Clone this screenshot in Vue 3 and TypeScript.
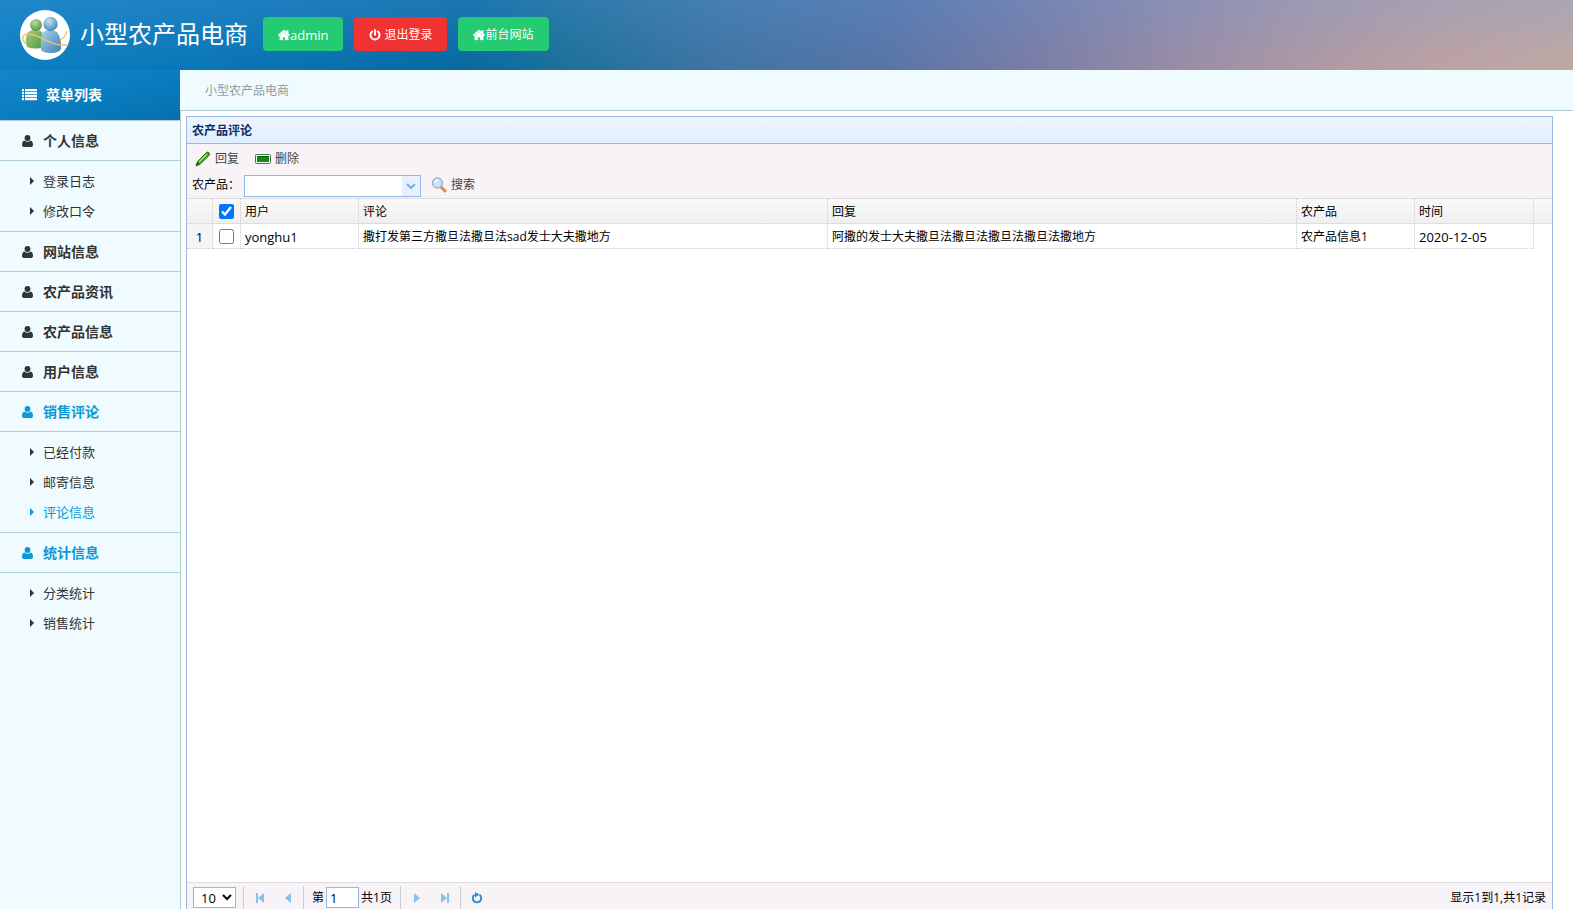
<script setup lang="ts">
import { ref } from 'vue'

interface MenuGroup {
  title: string
  active?: boolean
  items?: { label: string; active?: boolean }[]
}

const menu: MenuGroup[] = [
  { title: '个人信息', items: [{ label: '登录日志' }, { label: '修改口令' }] },
  { title: '网站信息' },
  { title: '农产品资讯' },
  { title: '农产品信息' },
  { title: '用户信息' },
  {
    title: '销售评论',
    active: true,
    items: [{ label: '已经付款' }, { label: '邮寄信息' }, { label: '评论信息', active: true }],
  },
  { title: '统计信息', active: true, items: [{ label: '分类统计' }, { label: '销售统计' }] },
]

const rows = [
  {
    user: 'yonghu1',
    comment: '撒打发第三方撒旦法撒旦法sad发士大夫撒地方',
    reply: '阿撒的发士大夫撒旦法撒旦法撒旦法撒旦法撒地方',
    product: '农产品信息1',
    date: '2020-12-05',
  },
]

const allChecked = ref(true)
const product = ref('')
const page = ref('1')
</script>

<template>
  <div class="app">
    <header class="top">
      <svg class="logo" viewBox="0 0 50 50" aria-hidden="true">
        <defs>
          <linearGradient id="g1" x1="0" y1="0" x2="1" y2="1">
            <stop offset="0" stop-color="#a9d08a" />
            <stop offset="1" stop-color="#4c9a35" />
          </linearGradient>
          <linearGradient id="b1" x1="0" y1="0" x2="1" y2="1">
            <stop offset="0" stop-color="#a8d4ee" />
            <stop offset="1" stop-color="#3a80b4" />
          </linearGradient>
          <radialGradient id="g2" cx=".4" cy=".3" r=".7">
            <stop offset="0" stop-color="#b9dca0" />
            <stop offset="1" stop-color="#549c40" />
          </radialGradient>
          <radialGradient id="b2" cx=".4" cy=".3" r=".7">
            <stop offset="0" stop-color="#c6e4f6" />
            <stop offset="1" stop-color="#4388bb" />
          </radialGradient>
        </defs>
        <circle cx="25" cy="25" r="25" fill="#fff" />
        <path d="M8 22q7-5 14 0l2 15q-8 3-17 0-3-8 1-15z" fill="url(#g1)" />
        <circle cx="16" cy="15" r="6" fill="url(#g2)" />
        <path d="M23 22q7-4 14 0 5 7 4 17-2 4-10 4t-10-3q-1-10 2-18z" fill="url(#b1)" />
        <circle cx="30.500" cy="14" r="7.200" fill="url(#b2)" />
        <path d="M6 34C0 28 3 23 10 24c12 2 20 11 31 11h6M40 30q6-3 7-9" fill="none" stroke="#efc06c" stroke-width="1.400" />
      </svg>
      <h1>小型农产品电商</h1>
      <nav class="actions">
        <a href="#" class="btn latin">
          <svg viewBox="0 0 12 12"><path d="M6 .8 0 6l.9 1L6 2.900 11.100 7l.9-1-1.700-1.500V1.500H8.500V3zM6 3.600 1.700 7.100V11h3.200V8h2.200v3h3.200V7.100z" stroke="#fff" stroke-width=".3" /></svg>admin
        </a>
        <a href="#" class="btn red">
          <svg viewBox="0 0 12 12"><path d="M3.200 2.500a4.500 4.500 0 1 0 5.600 0M6 1v4.800" fill="none" stroke="#fff" stroke-width="2" stroke-linecap="round" /></svg><span class="gap">退出登录</span>
        </a>
        <a href="#" class="btn">
          <svg viewBox="0 0 12 12"><path d="M6 .8 0 6l.9 1L6 2.900 11.100 7l.9-1-1.700-1.500V1.500H8.500V3zM6 3.600 1.700 7.100V11h3.200V8h2.200v3h3.200V7.100z" stroke="#fff" stroke-width=".3" /></svg>前台网站
        </a>
      </nav>
    </header>

    <div class="body">
      <aside class="side">
        <h2 class="side-title">
          <svg viewBox="0 0 15 12"><path d="M0 0h2v2.300H0zM3 0h12v2.300H3zM0 3h2v2.300H0zM3 3h12v2.300H3zM0 6h2v2.300H0zM3 6h12v2.300H3zM0 9h2v2.300H0zM3 9h12v2.300H3z" /></svg>菜单列表
        </h2>
        <section v-for="g in menu" :key="g.title">
          <a href="#" class="group" :class="{ on: g.active }">
            <svg viewBox="0 0 11 12"><circle cx="5.500" cy="3" r="2.900" /><path d="M2.400 5.500Q5.500 8 8.600 5.500 11 6 11 10q0 2-1.800 2H1.800Q0 12 0 10 0 6 2.400 5.500z" /></svg>{{ g.title }}
          </a>
          <ul v-if="g.items">
            <li v-for="i in g.items" :key="i.label">
              <a href="#" :class="{ on: i.active }">
                <svg viewBox="0 0 4 8"><path d="M0 0l4 4-4 4z" /></svg>{{ i.label }}
              </a>
            </li>
          </ul>
        </section>
      </aside>

      <main>
        <div class="crumb">小型农产品电商</div>
        <div class="frame">
          <div class="panel">
            <h3>农产品评论</h3>
            <div class="tools">
              <div class="line first">
                <button type="button">
                  <svg class="i16" viewBox="0 0 16 16"><path d="M1 15l1.500-4.500L11.500 1.500q1.500-1 2.500.2t.2 2.500L5.300 13z" fill="#35a01c" stroke="#26750f" /><path d="M4 11l8-8" stroke="#a5e57f" stroke-width="1.500" /><path d="M1 15l1.500-4 2 2z" fill="#3d4a35" /></svg>回复
                </button>
                <button type="button">
                  <svg class="i16" viewBox="0 0 16 16"><rect x=".5" y="3.500" width="15" height="9" rx="1" fill="#fff" stroke="#3c7a4c" /><path d="M2 5h12v6H2z" fill="#128c12" /><path d="M2 5h12v1H2z" fill="#0a5c16" /></svg>删除
                </button>
              </div>
              <div class="line second">
                <label for="product">农产品：</label>
                <span class="combo">
                  <input id="product" v-model="product" type="text" />
                  <button type="button" aria-label="展开">
                    <svg viewBox="0 0 10 6"><path d="M1 1l4 4 4-4" fill="none" stroke="#6fb3e6" stroke-width="2" /></svg>
                  </button>
                </span>
                <button type="button">
                  <svg class="i16" viewBox="0 0 16 16"><path d="M10 10l4 4" stroke="#e08a3a" stroke-width="3" stroke-linecap="round" /><circle cx="6.500" cy="6" r="5" fill="#c4e4fb" stroke="#9fb4cc" stroke-width="1.400" /><path d="M3.500 5.500q1-2.500 3.500-2.500" fill="none" stroke="#fff" stroke-width="1.300" /></svg>搜索
                </button>
              </div>
            </div>
            <div class="grid">
              <table>
                <colgroup>
                  <col class="c-no" /><col class="c-check" /><col class="c-mid" /><col /><col /><col class="c-mid" /><col class="c-date" /><col class="c-rest" />
                </colgroup>
                <thead>
                  <tr>
                    <th></th>
                    <th class="check"><input v-model="allChecked" type="checkbox" aria-label="全选" /></th>
                    <th>用户</th>
                    <th>评论</th>
                    <th>回复</th>
                    <th>农产品</th>
                    <th>时间</th>
                    <th class="rest"></th>
                  </tr>
                </thead>
                <tbody>
                  <tr v-for="(r, n) in rows" :key="n">
                    <td class="no latin">{{ n + 1 }}</td>
                    <td class="check"><input type="checkbox" :aria-label="r.user" /></td>
                    <td class="latin">{{ r.user }}</td>
                    <td>{{ r.comment }}</td>
                    <td>{{ r.reply }}</td>
                    <td>{{ r.product }}</td>
                    <td class="latin">{{ r.date }}</td>
                    <td class="rest"></td>
                  </tr>
                </tbody>
              </table>
            </div>
            <footer class="pager">
              <select aria-label="每页条数"><option>10</option><option>20</option></select>
              <i class="sep"></i>
              <button type="button" aria-label="首页"><svg viewBox="0 0 10 10"><path d="M1 0h2v10H1zM9 0v10L3 5z" /></svg></button>
              <button type="button" aria-label="上一页"><svg viewBox="0 0 10 10"><path d="M8 0v10L2 5z" /></svg></button>
              <i class="sep"></i>
              <label class="page">第<input v-model="page" type="text" />共1页</label>
              <i class="sep"></i>
              <button type="button" aria-label="下一页"><svg viewBox="0 0 10 10"><path d="M2 0v10l6-5z" /></svg></button>
              <button type="button" aria-label="末页"><svg viewBox="0 0 10 10"><path d="M7 0h2v10H7zM1 0v10l6-5z" /></svg></button>
              <i class="sep"></i>
              <button type="button" aria-label="刷新"><svg class="reload" viewBox="0 0 12 12"><path d="M8.500 2.800a4.200 4.200 0 1 1-5 0" fill="none" stroke="#2a8fd0" stroke-width="1.900" /><path d="M4 0l4.500 2.500L4 5.500z" fill="#2a8fd0" /></svg></button>
              <span class="info">显示1到1,共1记录</span>
            </footer>
          </div>
        </div>
      </main>
    </div>
  </div>
</template>

<style>
body {
  margin: 0;
}
</style>

<style scoped>
* {
  box-sizing: border-box;
}
.app {
  display: flex;
  flex-direction: column;
  height: 100vh;
  overflow: hidden;
  font: 12px/20px 'Open Sans', 'Noto Sans CJK SC', sans-serif;
  color: #000;
}
a {
  color: inherit;
  text-decoration: none;
}
svg {
  flex: none;
  fill: currentColor;
}
h1,
h2,
h3,
ul {
  margin: 0;
  padding: 0;
  list-style: none;
}
.latin {
  font-size: 13px;
}
.top {
  flex: none;
  display: flex;
  align-items: center;
  height: 70px;
  padding: 0 20px;
  color: #fff;
  background:
    linear-gradient(180deg, rgba(100, 160, 230, 0.24), rgba(100, 160, 230, 0)),
    linear-gradient(100deg, #0a80c2 0%, #0873b2 18%, #07699f 30%, #1b7099 36%, #3f74a3 46%, #5a74a6 57%, #7b7da4 66%, #998ca5 75%, #ae98a3 83%, #bda1a2 91%, #c2a8a2 100%);
}
.logo {
  width: 50px;
  height: 50px;
}
h1 {
  margin: 0 15px 2px 10px;
  font-size: 24px;
  line-height: 32px;
  font-weight: 400;
}
.actions {
  display: flex;
  gap: 11px;
  margin-bottom: 2px;
}
.btn {
  display: flex;
  align-items: center;
  height: 34px;
  padding: 1px 15px 0;
  border-radius: 4px;
  background: #24cb73;
}
.btn svg {
  width: 12px;
  height: 12px;
}
.red {
  background: #f03232;
}
.gap {
  margin-left: 3px;
}
.body {
  flex: 1;
  display: flex;
  min-height: 0;
}
.side {
  flex: none;
  width: 180px;
  background: #effbff;
  color: #333;
}
.side-title {
  display: flex;
  align-items: center;
  gap: 9px;
  height: 51px;
  padding-left: 22px;
  border-bottom: 1px solid #b0cdd4;
  color: #fff;
  font-size: 14px;
  background: linear-gradient(165deg, #1485cb 0%, #087bbd 60%, #0870ab 100%);
}
.side-title svg {
  width: 15px;
  height: 12px;
}
.group {
  display: flex;
  align-items: center;
  gap: 10px;
  height: 40px;
  padding-left: 22px;
  border-bottom: 1px solid #b0cdd4;
  font-size: 14px;
  font-weight: 700;
}
.group svg {
  width: 11px;
  height: 12px;
}
ul {
  padding: 5px 0;
  border-bottom: 1px solid #b0cdd4;
}
section:last-child ul {
  border: 0;
}
li a {
  display: flex;
  align-items: center;
  gap: 9px;
  height: 30px;
  padding-left: 30px;
  font-size: 13px;
}
li svg {
  width: 4px;
  height: 8px;
}
.on {
  color: #0c99d5;
}
main {
  flex: 1;
  min-width: 0;
  display: flex;
  flex-direction: column;
}
.crumb {
  flex: none;
  height: 41px;
  padding-left: 25px;
  border-bottom: 1px solid #b0cdd4;
  background: #effbff;
  color: #999;
  line-height: 42px;
}
.frame {
  flex: 1;
  min-height: 0;
  display: flex;
  padding: 5px 20px 0 5px;
  border-left: 1px solid #b0cdd4;
}
.panel {
  flex: 1;
  min-width: 0;
  display: flex;
  flex-direction: column;
  border: 1px solid #95b8e7;
  border-bottom: 0;
}
h3 {
  height: 27px;
  padding-left: 5px;
  border-bottom: 1px solid #95b8e7;
  background: linear-gradient(#eff5ff, #e0ecff);
  color: #0e2d5f;
  font-size: 12px;
  line-height: 28px;
}
.tools {
  padding: 2px 5px 0;
  border-bottom: 1px solid #ddd;
  background: #f8f3f7;
}
button {
  display: flex;
  align-items: center;
  gap: 4px;
  padding: 0;
  border: 0;
  background: none;
  font: inherit;
  color: #444;
}
.line {
  display: flex;
  align-items: center;
}
.first {
  height: 26px;
  gap: 16px;
  padding-left: 3px;
}
.second {
  height: 26px;
}
.second > button {
  margin-left: 10px;
}
.i16 {
  width: 16px;
  height: 16px;
}
.combo {
  display: flex;
  align-self: flex-end;
  width: 177px;
  height: 22px;
  margin: 0 0 1px 4px;
  border: 1px solid #95b8e7;
}
.combo input {
  flex: 1;
  min-width: 0;
  padding: 0 4px;
  border: 0;
  background: #fff;
  font: inherit;
}
.combo button {
  width: 18px;
  justify-content: center;
  background: #e8f0ff;
}
.combo svg {
  width: 10px;
  height: 6px;
}
.grid {
  flex: 1;
  min-height: 0;
  background: #fff;
}
table {
  width: 100%;
  table-layout: fixed;
  border-collapse: separate;
  border-spacing: 0;
}
.c-no {
  width: 26px;
}
.c-check {
  width: 28px;
}
.c-mid {
  width: 118px;
}
.c-date {
  width: 119px;
}
.c-rest {
  width: 18px;
}
th,
td {
  height: 25px;
  padding: 2px 4px 0;
  border-right: 1px dotted #ccc;
  border-bottom: 1px dotted #ccc;
  line-height: 20px;
  font-weight: 400;
  text-align: left;
  white-space: nowrap;
}
thead tr {
  background: linear-gradient(#f9f9f9, #efefef);
}
th {
  border-bottom: 1px solid #ddd;
}
.rest {
  border-right: 0;
}
td.rest {
  border-bottom: 0;
}
.no {
  background: #f5f5f5;
  text-align: center;
}
.check {
  padding: 0;
  text-align: center;
}
.check input {
  display: block;
  width: 15px;
  height: 15px;
  margin: 0 auto;
}
.pager {
  flex: none;
  display: flex;
  align-items: center;
  height: 27px;
  padding: 3px 6px 0;
  border-top: 1px solid #ddd;
  background: #f8f3f7;
}
.pager select {
  width: 43px;
  height: 21px;
  padding: 0 0 0 3px;
  border: 1px solid #95b8e7;
  background: #fff;
  font-family: inherit;
  font-size: 13px;
}
.sep {
  align-self: stretch;
  width: 1px;
  margin-left: 7px;
  background: #ccc;
}
.page + .sep {
  margin-left: 8px;
}
.pager button {
  width: 28px;
  justify-content: center;
  color: #84c3ef;
}
.pager .sep + button {
  margin-left: 2px;
}
.pager button + .sep {
  margin-left: 1px;
}
.pager svg {
  width: 10px;
  height: 10px;
}
.pager .reload {
  width: 12px;
  height: 12px;
}
.page {
  display: flex;
  align-items: center;
  gap: 2px;
  margin-left: 8px;
}
.page input {
  width: 33px;
  height: 21px;
  padding: 0 3px;
  border: 1px solid #95b8e7;
  font-family: inherit;
  font-size: 13px;
}
.info {
  margin-left: auto;
}
</style>
